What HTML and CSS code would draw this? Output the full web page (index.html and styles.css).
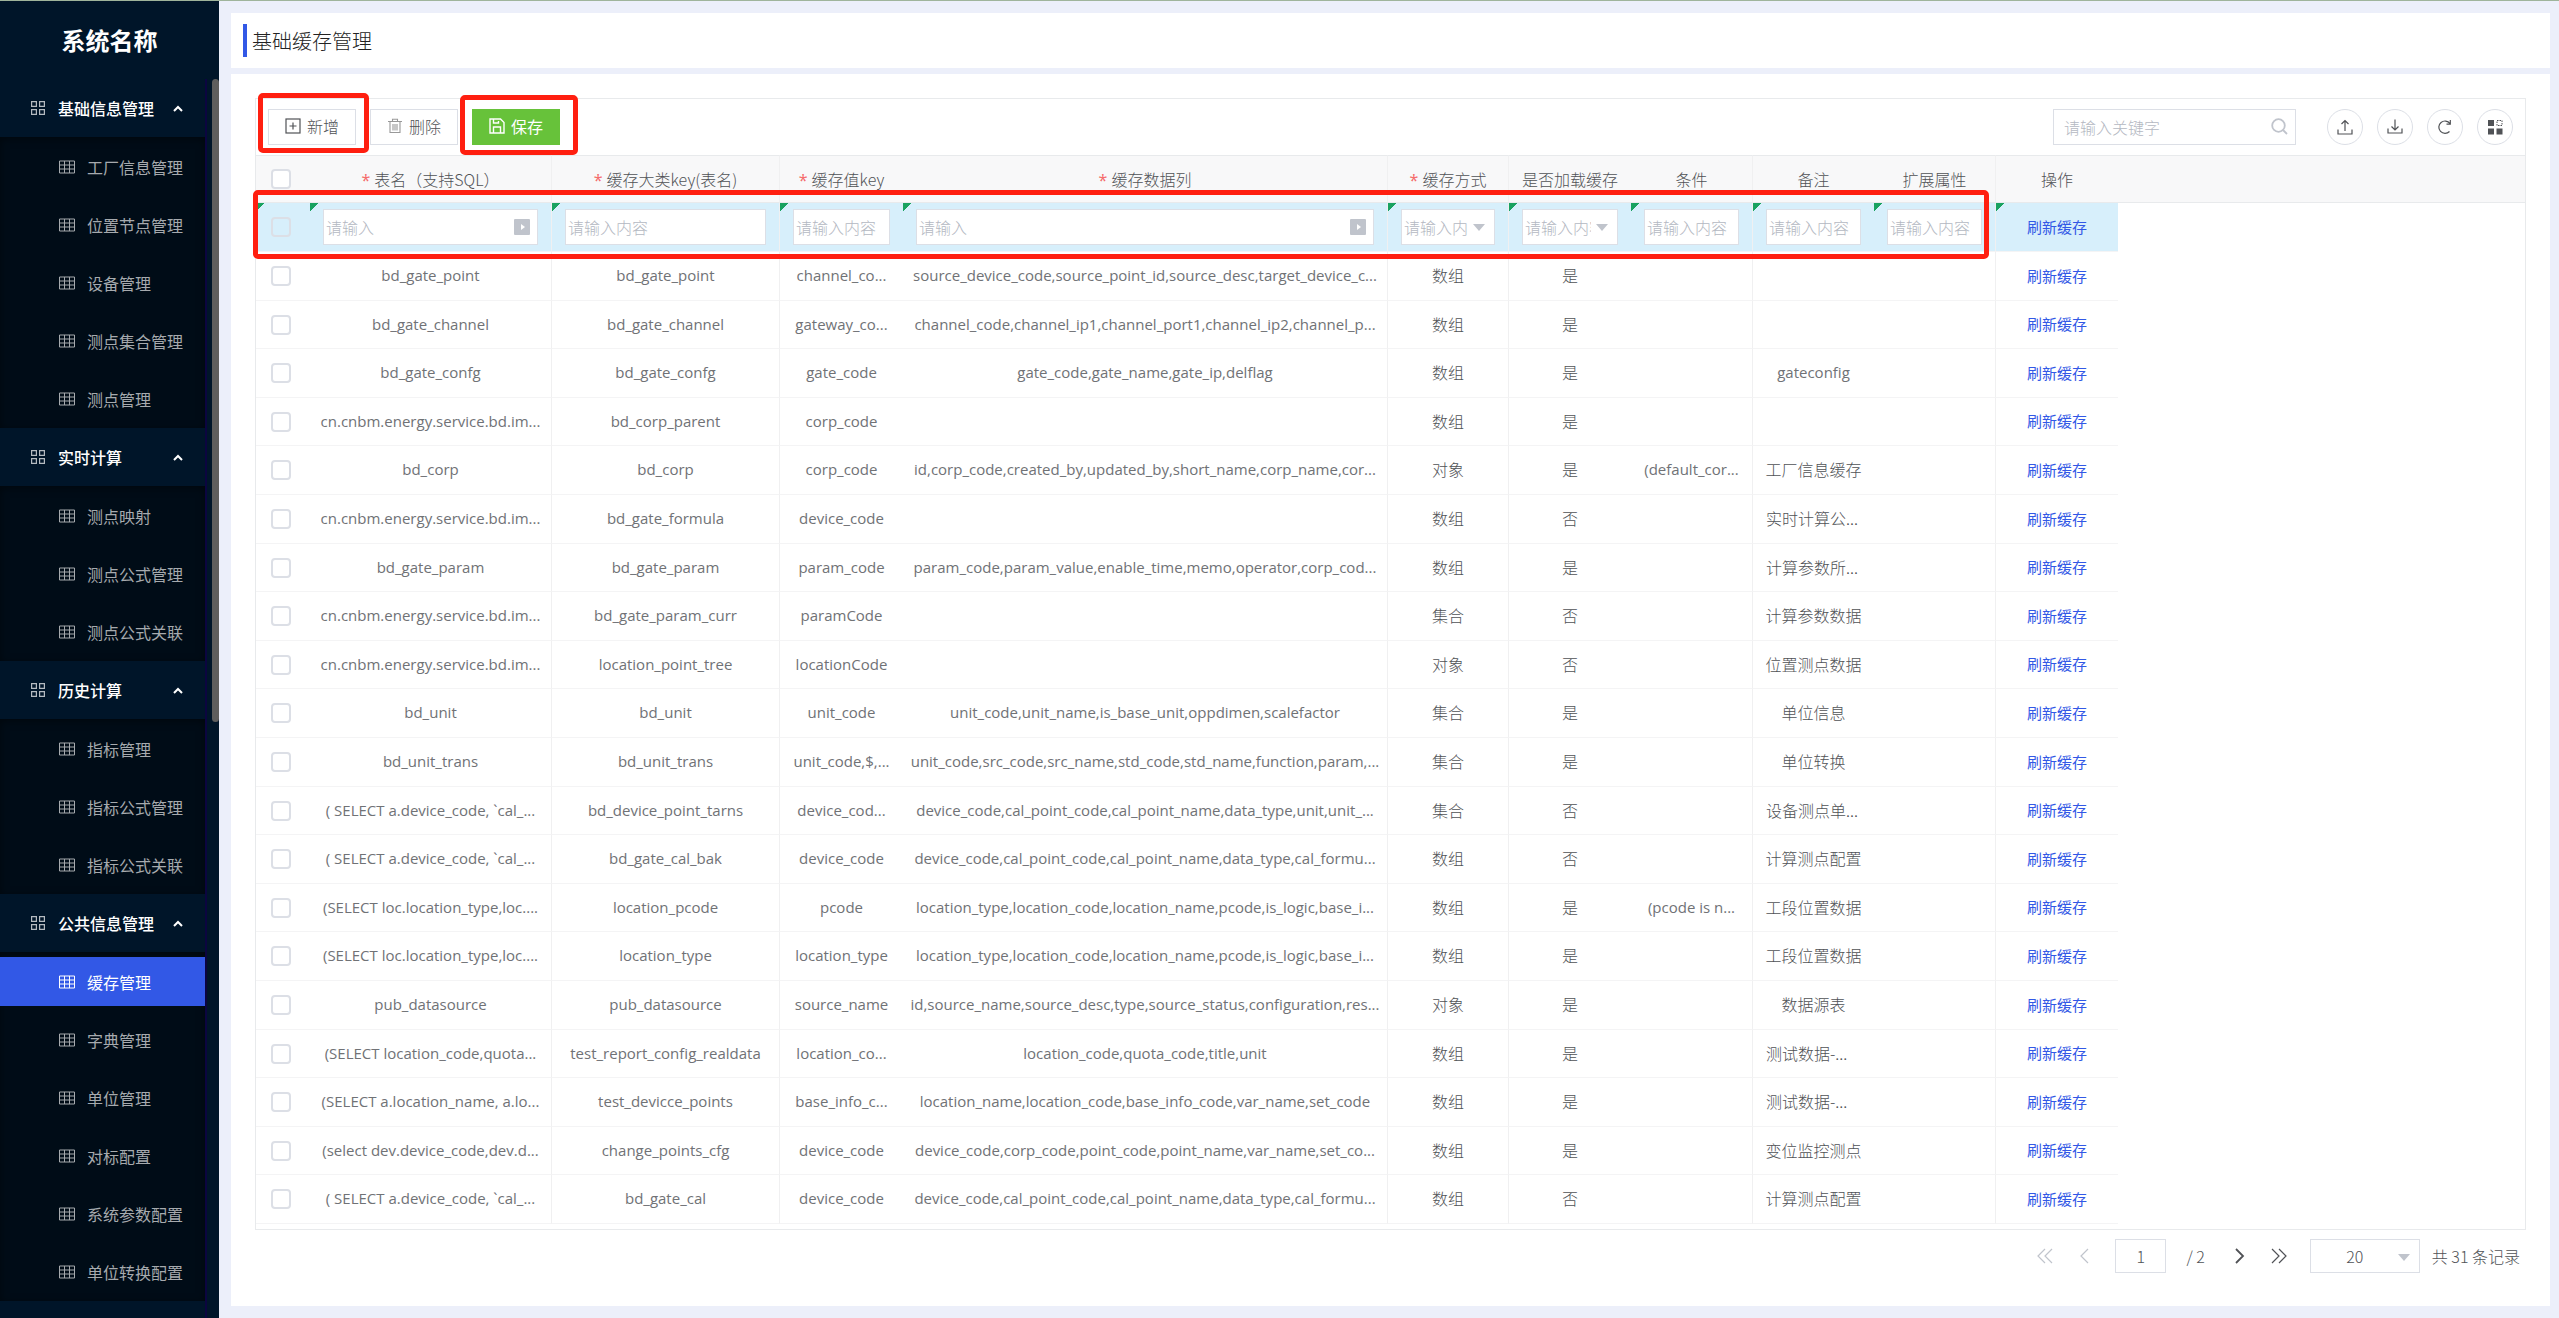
FILE: index.html
```html
<!DOCTYPE html>
<html lang="zh-CN">
<head>
  <meta charset="UTF-8" />
  <meta name="viewport" content="width=device-width, initial-scale=1.0"/>
  <title>基础缓存管理</title>
  <link rel="stylesheet" href="styles.css">
</head>
<body>

<!-- 公用图标 -->
<svg class="sprite" aria-hidden="true">
  <symbol id="i-app" viewBox="0 0 14 14"><path d="M.6.6h4.8v4.8H.6zM8.6.6h4.8v4.8H8.6zM.6 8.6h4.8v4.8H.6zM8.6 8.6h4.8v4.8H8.6z" fill="none" stroke="currentColor" stroke-width="1.2"/></symbol>
  <symbol id="i-table" viewBox="0 0 16 14"><path d="M.5 1h15v12H.5zM.5 5h15M.5 9h15M5.5 1v12M10.5 1v12" fill="none" stroke="currentColor"/></symbol>
  <symbol id="i-up" viewBox="0 0 10 7"><path d="M1 6l4-4 4 4" fill="none" stroke="currentColor" stroke-width="2"/></symbol>
  <symbol id="i-expand" viewBox="0 0 16 16"><rect width="16" height="16" rx="1" fill="currentColor"/><path d="M7 5l4 3-4 3z" fill="#fff"/></symbol>
</svg>

<div class="layout">
  <aside class="sidebar">
    <h1 class="logo">系统名称</h1>
    <nav class="menu" id="menu"></nav>
    <span class="scroll-thumb"></span>
  </aside>

  <main class="main">
    <header class="page-header">
      <h2>基础缓存管理</h2>
    </header>

    <section class="content">
      <div class="grid">
        <div class="toolbar">
          <span class="marked mark-add">
            <button class="btn" type="button">
              <svg width="16" height="16" viewBox="0 0 16 16" fill="none" stroke="currentColor" stroke-width="1.2"><rect x="1" y="1" width="14" height="14"/><path d="M8 4.500v7M4.500 8h7"/></svg>新增
            </button>
          </span>
          <button class="btn btn-delete" type="button">
            <svg width="16" height="16" viewBox="0 0 16 16" fill="none" stroke="currentColor" stroke-width="1.1"><path d="M1 3.500h14M5.500 3V1.200h5V3M3 4v10.500h10V4M6 6v6.500M8 6v6.500M10 6v6.500"/></svg>删除
          </button>
          <span class="marked mark-save">
            <button class="btn btn-save" type="button">
              <svg width="16" height="16" viewBox="0 0 16 16" fill="none" stroke="currentColor" stroke-width="1.4"><path d="M1 1h10.500L15 4.500V15H1zM4.500 15V9h7v6M4.500 1v4h5V3"/></svg>保存
            </button>
          </span>
          <div class="search">
            <input type="text" placeholder="请输入关键字" aria-label="关键字">
            <svg width="17" height="17" viewBox="0 0 17 17" fill="none" stroke="currentColor" stroke-width="1.8"><circle cx="7.500" cy="7.500" r="6.300"/><path d="M12 12l4 4"/></svg>
          </div>
          <div class="tools">
            <button type="button" aria-label="导入"><svg width="16" height="16" viewBox="0 0 16 16" fill="none" stroke="currentColor" stroke-width="1.2"><path d="M1 10.500V15h14v-4.500M8 12V1.500M4.500 5L8 1.500 11.500 5"/></svg></button>
            <button type="button" aria-label="导出"><svg width="16" height="16" viewBox="0 0 16 16" fill="none" stroke="currentColor" stroke-width="1.2"><path d="M1 9.500V14h14V9.500M8 .5V11M4.500 7.500L8 11l3.500-3.500"/></svg></button>
            <button type="button" aria-label="刷新"><svg width="16" height="16" viewBox="0 0 16 16" fill="none" stroke="currentColor" stroke-width="1.2"><path d="M12.500 12.500A6.200 6.200 0 1 1 13 4.500M13.300 1v4.200H9.500"/></svg></button>
            <button type="button" aria-label="列设置"><svg width="16" height="16" viewBox="0 0 16 16"><path d="M1 1h6v6H1zM1 9.500h6v6H1zM9.500 9.500h6v6h-6z" fill="currentColor"/><rect x="10" y="1.500" width="5" height="5" fill="none" stroke="currentColor" stroke-dasharray="1.500 1"/></svg></button>
          </div>
        </div>

        <div class="table-wrap">
          <table>
            <colgroup>
              <col class="w-check"><col class="w-table"><col class="w-key"><col class="w-value"><col class="w-data">
              <col class="w-short"><col class="w-std"><col class="w-std"><col class="w-short"><col class="w-std"><col class="w-std"><col>
            </colgroup>
            <thead>
              <tr>
                <th><input type="checkbox" aria-label="全选"></th>
                <th class="line"><i>*</i>表名（支持SQL）</th>
                <th class="line"><i>*</i>缓存大类key(表名)</th>
                <th><i>*</i>缓存值key</th>
                <th class="line"><i>*</i>缓存数据列</th>
                <th class="line"><i>*</i>缓存方式</th>
                <th>是否加载缓存</th>
                <th class="line">条件</th>
                <th>备注</th>
                <th class="line">扩展属性</th>
                <th>操作</th>
                <th class="rest"></th>
              </tr>
            </thead>
            <tbody id="rows">
              <tr class="editing">
                <td><input type="checkbox" aria-label="选择新增行"></td>
                <td class="line"><div class="field"><input type="text" placeholder="请输入" aria-label="表名"><svg width="16" height="16"><use href="#i-expand"/></svg></div></td>
                <td class="line"><div class="field"><input type="text" placeholder="请输入内容" aria-label="缓存大类key"></div></td>
                <td><div class="field"><input type="text" placeholder="请输入内容" aria-label="缓存值key"></div></td>
                <td class="line"><div class="field"><input type="text" placeholder="请输入" aria-label="缓存数据列"><svg width="16" height="16"><use href="#i-expand"/></svg></div></td>
                <td class="line"><div class="field drop"><select aria-label="缓存方式"><option>请输入内容</option></select></div></td>
                <td><div class="field drop"><select aria-label="是否加载缓存"><option>请输入内容</option></select></div></td>
                <td class="line"><div class="field"><input type="text" placeholder="请输入内容" aria-label="条件"></div></td>
                <td><div class="field"><input type="text" placeholder="请输入内容" aria-label="备注"></div></td>
                <td class="line"><div class="field"><input type="text" placeholder="请输入内容" aria-label="扩展属性"></div></td>
                <td><a href="#">刷新缓存</a></td>
                <td class="rest"></td>
              </tr>
            </tbody>
          </table>
          <span class="row-mark"></span>
        </div>
      </div>

      <footer class="pager">
        <button type="button" disabled aria-label="首页"><svg width="16" height="16" viewBox="0 0 16 16"><path d="M8 1L1 8l7 7M15 1L8 8l7 7"/></svg></button>
        <button type="button" disabled aria-label="上一页"><svg width="16" height="16" viewBox="0 0 16 16"><path d="M12 1L5 8l7 7"/></svg></button>
        <input class="page-no" type="text" value="1" aria-label="页码">
        <span class="page-total">/ 2</span>
        <button type="button" aria-label="下一页"><svg width="16" height="16" viewBox="0 0 16 16"><path d="M4 1l7 7-7 7" stroke-width="1.800"/></svg></button>
        <button type="button" aria-label="末页"><svg width="16" height="16" viewBox="0 0 16 16"><path d="M1 1l7 7-7 7M8 1l7 7-7 7"/></svg></button>
        <div class="drop page-size"><select aria-label="每页条数"><option>20</option></select></div>
        <span>共 31 条记录</span>
      </footer>
    </section>
  </main>
</div>

<script>
  const menu = [
    ["基础信息管理", ["工厂信息管理", "位置节点管理", "设备管理", "测点集合管理", "测点管理"]],
    ["实时计算", ["测点映射", "测点公式管理", "测点公式关联"]],
    ["历史计算", ["指标管理", "指标公式管理", "指标公式关联"]],
    ["公共信息管理", ["缓存管理", "字典管理", "单位管理", "对标配置", "系统参数配置", "单位转换配置"]]
  ];

  document.getElementById("menu").innerHTML = menu.map(([name, items]) => `
    <button class="menu-title" type="button">
      <svg width="14" height="14"><use href="#i-app"/></svg><span>${name}</span><svg class="arrow" width="10" height="7"><use href="#i-up"/></svg>
    </button>
    <ul class="submenu">
      ${items.map(t => `<li><a href="#"${t === "缓存管理" ? ' class="active"' : ""}><svg width="16" height="14"><use href="#i-table"/></svg>${t}</a></li>`).join("")}
    </ul>`).join("");

  // 表名, 大类key, 值key, 数据列, 方式, 是否加载, 条件, 备注
  const rows = [
    ["bd_gate_point", "bd_gate_point", "channel_co...", "source_device_code,source_point_id,source_desc,target_device_c...", "数组", "是", "", ""],
    ["bd_gate_channel", "bd_gate_channel", "gateway_co...", "channel_code,channel_ip1,channel_port1,channel_ip2,channel_p...", "数组", "是", "", ""],
    ["bd_gate_confg", "bd_gate_confg", "gate_code", "gate_code,gate_name,gate_ip,delflag", "数组", "是", "", "gateconfig"],
    ["cn.cnbm.energy.service.bd.im...", "bd_corp_parent", "corp_code", "", "数组", "是", "", ""],
    ["bd_corp", "bd_corp", "corp_code", "id,corp_code,created_by,updated_by,short_name,corp_name,cor...", "对象", "是", "(default_cor...", "工厂信息缓存"],
    ["cn.cnbm.energy.service.bd.im...", "bd_gate_formula", "device_code", "", "数组", "否", "", "实时计算公..."],
    ["bd_gate_param", "bd_gate_param", "param_code", "param_code,param_value,enable_time,memo,operator,corp_cod...", "数组", "是", "", "计算参数所..."],
    ["cn.cnbm.energy.service.bd.im...", "bd_gate_param_curr", "paramCode", "", "集合", "否", "", "计算参数数据"],
    ["cn.cnbm.energy.service.bd.im...", "location_point_tree", "locationCode", "", "对象", "否", "", "位置测点数据"],
    ["bd_unit", "bd_unit", "unit_code", "unit_code,unit_name,is_base_unit,oppdimen,scalefactor", "集合", "是", "", "单位信息"],
    ["bd_unit_trans", "bd_unit_trans", "unit_code,$,...", "unit_code,src_code,src_name,std_code,std_name,function,param,...", "集合", "是", "", "单位转换"],
    ["( SELECT a.device_code, `cal_...", "bd_device_point_tarns", "device_cod...", "device_code,cal_point_code,cal_point_name,data_type,unit,unit_...", "集合", "否", "", "设备测点单..."],
    ["( SELECT a.device_code, `cal_...", "bd_gate_cal_bak", "device_code", "device_code,cal_point_code,cal_point_name,data_type,cal_formu...", "数组", "否", "", "计算测点配置"],
    ["(SELECT loc.location_type,loc....", "location_pcode", "pcode", "location_type,location_code,location_name,pcode,is_logic,base_i...", "数组", "是", "(pcode is n...", "工段位置数据"],
    ["(SELECT loc.location_type,loc....", "location_type", "location_type", "location_type,location_code,location_name,pcode,is_logic,base_i...", "数组", "是", "", "工段位置数据"],
    ["pub_datasource", "pub_datasource", "source_name", "id,source_name,source_desc,type,source_status,configuration,res...", "对象", "是", "", "数据源表"],
    ["(SELECT location_code,quota...", "test_report_config_realdata", "location_co...", "location_code,quota_code,title,unit", "数组", "是", "", "测试数据-..."],
    ["(SELECT a.location_name, a.lo...", "test_devicce_points", "base_info_c...", "location_name,location_code,base_info_code,var_name,set_code", "数组", "是", "", "测试数据-..."],
    ["(select dev.device_code,dev.d...", "change_points_cfg", "device_code", "device_code,corp_code,point_code,point_name,var_name,set_co...", "数组", "是", "", "变位监控测点"],
    ["( SELECT a.device_code, `cal_...", "bd_gate_cal", "device_code", "device_code,cal_point_code,cal_point_name,data_type,cal_formu...", "数组", "否", "", "计算测点配置"]
  ];

  // 右侧带竖线的列
  const lined = [0, 1, 3, 4, 6];

  function cell(v, i) {
    const names = [];
    if (lined.includes(i)) names.push("line");
    if (/^[\x20-\x7e]+$/.test(v)) names.push("code");
    // 被截断的文字靠左
    if (i === 7 && v.endsWith("...")) names.push("cut");
    return `<td class="${names.join(" ")}">${v}</td>`;
  }

  document.getElementById("rows").insertAdjacentHTML("beforeend", rows.map((r, n) => `
    <tr>
      <td><input type="checkbox" aria-label="选择第${n + 1}行"></td>
      ${r.map(cell).join("")}
      <td class="line"></td>
      <td><a href="#">刷新缓存</a></td>
      <td class="rest"></td>
    </tr>`).join(""));
</script>

</body>
</html>
```

FILE: styles.css
```css
* {
  box-sizing: border-box;
}

body {
  margin: 0;
  font-family: "Noto Sans CJK SC", sans-serif;
  font-size: 16px;
  font-weight: 300;
  line-height: 24px;
  color: #505256;
  background: #eceffa;
  border-top: 1px solid #9fb49b;
}

button, input, select {
  font: inherit;
  color: inherit;
}

.sprite {
  position: absolute;
  width: 0;
  height: 0;
}

.layout {
  display: flex;
  height: calc(100vh - 1px);
}

/* 侧边栏 */
.sidebar {
  position: relative;
  flex: none;
  width: 219px;
  overflow: hidden;
  background: #001529;
  color: #fff;
  font-weight: 400;
}

.logo {
  margin: 0;
  height: 78px;
  line-height: 78px;
  text-align: center;
  font-size: 24px;
  font-weight: bold;
}

.menu {
  width: 207px;
  height: 100%;
  border-right: 2px solid #0b0540;
}

.menu-title {
  display: flex;
  align-items: center;
  width: 100%;
  height: 58px;
  padding: 0 22px 0 31px;
  border: 0;
  background: none;
  font-weight: 500;
  text-align: left;
}

.menu-title svg:first-child {
  color: #b4bac0;
}

.menu-title span {
  flex: 1;
  margin-left: 13px;
}

.submenu {
  display: flex;
  flex-direction: column;
  gap: 9px;
  margin: 0;
  padding: 5px 0;
  list-style: none;
  background: #000c17;
  box-shadow: inset 0 2px 8px rgba(0, 0, 0, 0.45);
}

.submenu a {
  display: flex;
  align-items: center;
  gap: 12px;
  height: 49px;
  padding-left: 59px;
  color: #a6aaae;
  text-decoration: none;
}

.submenu a.active {
  background: #3258e6;
  color: #fff;
}

.scroll-thumb {
  position: absolute;
  top: 78px;
  right: 0;
  width: 7px;
  height: 643px;
  border-radius: 4px;
  background: #5f5e5d;
}

/* 主区域 */
.main {
  display: flex;
  flex-direction: column;
  flex: 1;
  min-width: 0;
  gap: 6px;
  padding: 12px 9px 12px 12px;
}

.page-header {
  padding: 11px 12px;
  background: #fff;
}

.page-header h2 {
  margin: 0;
  padding-left: 5px;
  border-left: 4px solid #3258e6;
  font-size: 20px;
  line-height: 33px;
  font-weight: 300;
  color: #222;
}

.content {
  flex: 1;
  padding: 24px 24px 0;
  background: #fff;
}

.grid {
  border: 1px solid #e8eaec;
  padding-bottom: 5px;
}

.toolbar {
  display: flex;
  align-items: center;
  gap: 14px;
  padding: 10px 12px;
}

.btn {
  display: flex;
  align-items: center;
  gap: 6px;
  height: 36px;
  padding: 0 16px 2px;
  border: 1px solid #dcdfe6;
  background: #fff;
}

.btn-delete svg {
  color: #999;
}

.btn-save {
  border-color: #67c23a;
  background: #67c23a;
  color: #fff;
  font-weight: 400;
}

/* 红色标注框 */
.marked {
  position: relative;
}

.marked::after,
.row-mark {
  content: "";
  position: absolute;
  border: 5px solid #ff1f10;
  border-radius: 5px;
  pointer-events: none;
}

.mark-add::after {
  inset: -16px -13px -8px -10px;
}

.mark-save::after {
  inset: -14px -18px -10px -12px;
}

.row-mark {
  top: 35px;
  left: -3px;
  width: 1736px;
  height: 69px;
}

.search {
  position: relative;
  width: 243px;
  margin-left: auto;
  margin-right: 17px;
}

.search input {
  display: block;
  width: 100%;
  height: 36px;
  padding: 0 36px 0 10px;
  border: 1px solid #dcdfe6;
}

.search svg {
  position: absolute;
  top: 9px;
  right: 8px;
  color: #c0c4cc;
}

.tools {
  display: flex;
  gap: 14px;
}

.tools button {
  display: flex;
  align-items: center;
  justify-content: center;
  width: 36px;
  height: 36px;
  padding: 0;
  border: 1px solid #dcdfe6;
  border-radius: 50%;
  background: #fff;
}

::placeholder {
  color: #b4b8c2;
  opacity: 1;
}

/* 表格 */
.table-wrap {
  position: relative;
}

table {
  width: 100%;
  table-layout: fixed;
  border-collapse: separate;
  border-spacing: 0;
  text-align: center;
}

.w-check { width: 54px; }
.w-table { width: 242px; }
.w-key { width: 228px; }
.w-value { width: 123px; }
.w-data { width: 485px; }
.w-short { width: 121px; }
.w-std { width: 122px; }

th, td {
  padding: 0;
  white-space: nowrap;
  border-bottom: 1px solid #f4f4f5;
}

th {
  height: 48px;
  border-top: 1px solid #e8eaec;
  border-bottom-color: #e8eaec;
  background: #f8f8f9;
  font-weight: 300;
}

th i {
  margin-right: 4px;
  color: #f56c6c;
  font-family: "Noto Sans", sans-serif;
  font-style: normal;
  font-weight: 400;
}

td {
  height: 49px;
}

td + td {
  padding-bottom: 2px;
}

tr:nth-child(5n) td,
tr:nth-child(5n + 3) td {
  height: 48px;
}

.line {
  border-right: 1px solid #f0f0f1;
}

.code {
  font-family: "Open Sans", sans-serif;
  font-size: 15px;
  font-weight: 400;
  color: #707276;
}

td.cut {
  padding-left: 13px;
  text-align: left;
}

td.rest {
  border-bottom: 0;
}

td a {
  font-size: 15px;
  font-weight: 400;
  color: #3258e6;
  text-decoration: none;
}

input[type="checkbox"] {
  appearance: none;
  display: block;
  width: 20px;
  height: 20px;
  margin: 0 0 0 15px;
  border: 2px solid #dcdfe6;
  border-radius: 4px;
  background: #fff;
}

.editing td:not(.rest) {
  background: linear-gradient(135deg, #1aa260 6px, transparent 6px) no-repeat #d7effb;
}

.editing input[type="checkbox"] {
  background: none;
}

.field {
  position: relative;
  margin: 2px 13px 0;
}

.field input,
.field select {
  display: block;
  width: 100%;
  height: 36px;
  padding: 0 2px;
  border: 1px solid #dcdfe6;
  background: #fff;
}

.field svg {
  position: absolute;
  top: 10px;
  right: 8px;
  color: #c0c4cc;
}

.field select {
  padding-right: 26px;
  color: #b4b8c2;
}

.drop {
  position: relative;
}

.drop select {
  appearance: none;
  border-radius: 0;
}

.drop::after {
  content: "";
  position: absolute;
  top: 15px;
  right: 10px;
  border: 6px solid transparent;
  border-top: 7px solid #c0c4cc;
  border-bottom: 0;
}

/* 分页 */
.pager {
  display: flex;
  align-items: center;
  justify-content: flex-end;
  padding: 9px 6px;
}

.pager button {
  display: flex;
  margin-right: 23px;
  padding: 0;
  border: 0;
  background: none;
}

.pager button:disabled {
  color: #c0c4cc;
}

.pager svg {
  fill: none;
  stroke: currentColor;
  stroke-width: 1.2;
}

.page-no {
  width: 51px;
  height: 34px;
  padding: 0;
  border: 1px solid #dcdfe6;
  text-align: center;
}

.page-total {
  margin: 0 27px 0 20px;
}

.page-size {
  width: 110px;
  margin-right: 12px;
}

.page-size select {
  width: 100%;
  height: 34px;
  padding: 0 20px 0 0;
  border: 1px solid #dcdfe6;
  background: #fff;
  text-align: center;
  text-align-last: center;
}
```
